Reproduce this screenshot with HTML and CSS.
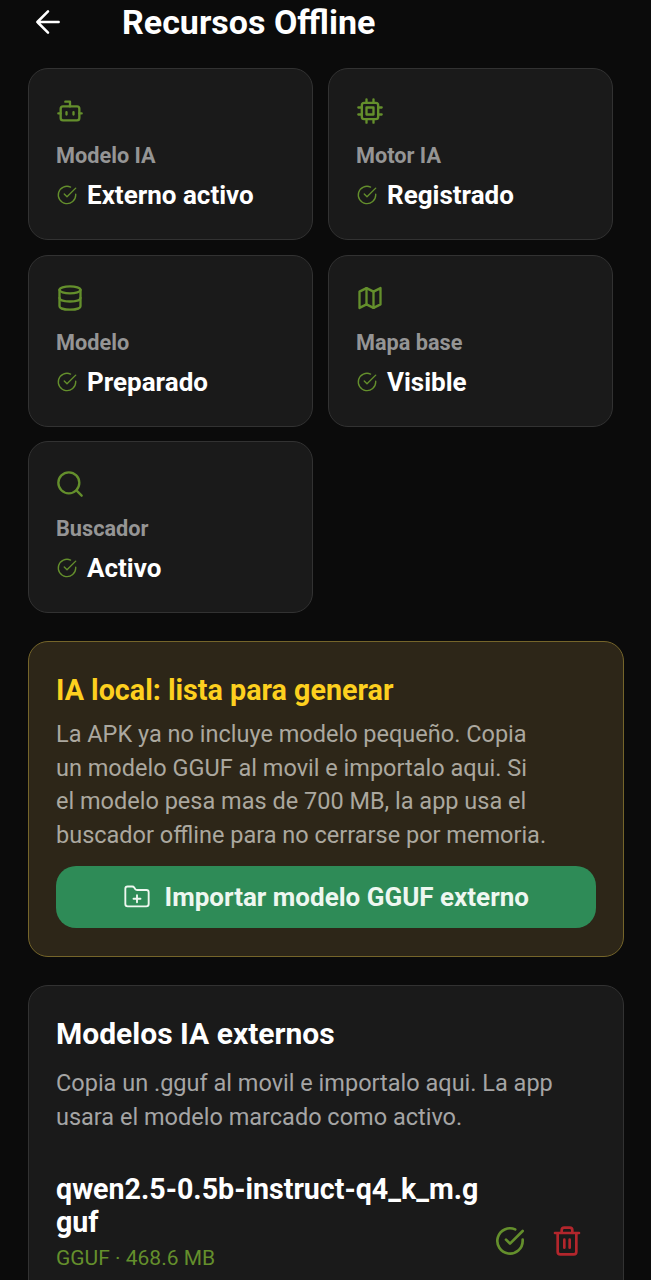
FILE: index.html
```html
<!DOCTYPE html>
<html lang="es">
<head>
  <title>Recursos Offline</title>
  <meta charset="UTF-8">
  <meta name="viewport" content="width=device-width, initial-scale=1.0">
  <link rel="stylesheet" href="styles.css">
</head>
<body>
  <header class="top-bar">
    <svg class="back-icon" viewBox="0 0 24 24"><path d="M19.500 12H4.500M12 4.500 4.500 12l7.500 7.500"/></svg>
    <h1 class="page-title">Recursos Offline</h1>
  </header>

  <main class="content">
    <section class="status-grid">
      <div class="status-card">
        <svg class="card-icon" viewBox="0 0 24 24"><path d="M12 8V4H8"/><rect x="4" y="8" width="16" height="12" rx="2"/><path d="M2 14h2M20 14h2M15 13v2M9 13v2"/></svg>
        <div class="card-label">Modelo IA</div>
        <div class="card-value">
          <svg class="check-icon" viewBox="0 0 24 24"><path d="M21.500 11v1a9.500 9.500 0 1 1-5.600-8.700"/><path d="m21.500 4.500-9.500 9.500-3-3"/></svg>
          <span>Externo activo</span>
        </div>
      </div>
      <div class="status-card">
        <svg class="card-icon" viewBox="0 0 24 24"><rect x="5" y="5" width="14" height="14" rx="2"/><rect x="9" y="9" width="6" height="6"/><path d="M15 2v3M15 19v3M2 15h3M2 9h3M19 15h3M19 9h3M9 2v3M9 19v3"/></svg>
        <div class="card-label">Motor IA</div>
        <div class="card-value">
          <svg class="check-icon" viewBox="0 0 24 24"><path d="M21.500 11v1a9.500 9.500 0 1 1-5.600-8.700"/><path d="m21.500 4.500-9.500 9.500-3-3"/></svg>
          <span>Registrado</span>
        </div>
      </div>
      <div class="status-card">
        <svg class="card-icon" viewBox="0 0 24 24"><ellipse cx="12" cy="5" rx="9" ry="3"/><path d="M3 5v14c0 1.700 4 3 9 3s9-1.300 9-3V5"/><path d="M3 12c0 1.700 4 3 9 3s9-1.300 9-3"/></svg>
        <div class="card-label">Modelo</div>
        <div class="card-value">
          <svg class="check-icon" viewBox="0 0 24 24"><path d="M21.500 11v1a9.500 9.500 0 1 1-5.600-8.700"/><path d="m21.500 4.500-9.500 9.500-3-3"/></svg>
          <span>Preparado</span>
        </div>
      </div>
      <div class="status-card">
        <svg class="card-icon" viewBox="0 0 24 24"><path d="M3 6.500 9 3.500l6 3 6-3v14l-6 3-6-3-6 3z"/><path d="M9 3.500v14M15 6.500v14"/></svg>
        <div class="card-label">Mapa base</div>
        <div class="card-value">
          <svg class="check-icon" viewBox="0 0 24 24"><path d="M21.500 11v1a9.500 9.500 0 1 1-5.600-8.700"/><path d="m21.500 4.500-9.500 9.500-3-3"/></svg>
          <span>Visible</span>
        </div>
      </div>
      <div class="status-card">
        <svg class="card-icon" viewBox="0 0 24 24"><circle cx="11" cy="11" r="9"/><path d="m22 22-4.500-4.500"/></svg>
        <div class="card-label">Buscador</div>
        <div class="card-value">
          <svg class="check-icon" viewBox="0 0 24 24"><path d="M21.500 11v1a9.500 9.500 0 1 1-5.600-8.700"/><path d="m21.500 4.500-9.500 9.500-3-3"/></svg>
          <span>Activo</span>
        </div>
      </div>
    </section>

    <section class="panel panel-warning">
      <h2 class="warning-title">IA local: lista para generar</h2>
      <p class="panel-text warning-text">La APK ya no incluye modelo pequeño. Copia un modelo GGUF al movil e importalo aqui. Si el modelo pesa mas de 700 MB, la app usa el buscador offline para no cerrarse por memoria.</p>
      <button class="import-button">
        <svg class="import-icon" viewBox="0 0 24 24"><path d="M12 10.500v6M9 13.500h6"/><path d="M20 20a2 2 0 0 0 2-2V8a2 2 0 0 0-2-2h-7.900a2 2 0 0 1-1.700-.9l-.8-1.200A2 2 0 0 0 7.900 3H4a2 2 0 0 0-2 2v13a2 2 0 0 0 2 2z"/></svg>
        <span>Importar modelo GGUF externo</span>
      </button>
    </section>

    <section class="panel panel-models">
      <h2 class="models-title">Modelos IA externos</h2>
      <p class="panel-text models-text">Copia un .gguf al movil e importalo aqui. La app usara el modelo marcado como activo.</p>
      <div class="model-row">
        <div class="model-info">
          <div class="model-name">qwen2.5-0.5b-instruct-q4_k_m.gguf</div>
          <div class="model-meta">GGUF · 468.6 MB</div>
        </div>
        <div class="model-actions">
          <svg class="action-icon action-active" viewBox="0 0 24 24"><path d="M21.500 11v1a9.500 9.500 0 1 1-5.600-8.700"/><path d="m21.500 4.500-9.500 9.500-3-3"/></svg>
          <svg class="action-icon action-delete" viewBox="0 0 24 24"><path d="M3 6h18M19 6v14a2 2 0 0 1-2 2H7a2 2 0 0 1-2-2V6M8 6V4a2 2 0 0 1 2-2h4a2 2 0 0 1 2 2v2M10 11v6M14 11v6"/></svg>
        </div>
      </div>
    </section>
  </main>
</body>
</html>
```

FILE: styles.css
```css
html, body {
  height: 1280px;
  overflow: hidden;
}
body {
  margin: 0;
  background-color: #0b0b0b;
  font-family: Roboto, "Noto Sans", Arial, sans-serif;
  color: #fff;
}
svg {
  display: block;
  fill: none;
  stroke: currentColor;
  stroke-width: 2;
  stroke-linecap: round;
  stroke-linejoin: round;
  flex-shrink: 0;
}
.top-bar {
  display: flex;
  align-items: center;
  height: 44px;
  padding-left: 31px;
}
.back-icon {
  width: 34px;
  height: 34px;
  stroke-width: 1.8;
}
.page-title {
  margin: 0 0 0 57px;
  font-size: 34px;
  font-weight: 700;
}
.content {
  padding: 24px 27px 0 28px;
}
.status-grid {
  display: grid;
  grid-template-columns: 285px 285px;
  gap: 14.5px 15px;
}
.status-card {
  height: 172px;
  box-sizing: border-box;
  padding: 28px 27px 0;
  background-color: #1a1a1a;
  border: 1px solid #323232;
  border-radius: 20px;
}
.card-icon {
  width: 28px;
  height: 28px;
  color: #648f2c;
}
.card-label {
  margin-top: 16px;
  font-size: 21.7px;
  font-weight: 700;
  line-height: 30px;
  color: #959595;
}
.card-value {
  display: flex;
  align-items: center;
  gap: 9px;
  margin-top: 7px;
  font-size: 26px;
  font-weight: 700;
  line-height: 34px;
}
.check-icon {
  width: 22px;
  height: 22px;
  stroke-width: 1.5;
  color: #648f2c;
}
.panel {
  box-sizing: border-box;
  width: 595.5px;
  border-radius: 20px;
}
.panel-warning {
  height: 316px;
  margin-top: 28px;
  padding: 30px 27px 0;
  background-color: #2d2618;
  border: 1px solid #75652a;
}
.warning-title {
  margin: 0;
  font-size: 28.7px;
  font-weight: 700;
  line-height: 36px;
  color: #fdd01f;
}
.panel-text {
  margin: 10px 0 0;
  font-size: 23.5px;
  line-height: 33.7px;
  color: #a5a5a5;
}
.warning-text {
  max-width: 492px;
  color: #aba89f;
}
.import-button {
  display: flex;
  align-items: center;
  justify-content: center;
  gap: 14px;
  width: 100%;
  height: 62px;
  margin-top: 13px;
  border: 0;
  border-radius: 20px;
  background-color: #2e8b57;
  font-family: inherit;
  font-size: 26px;
  font-weight: 700;
  color: #eef7f0;
}
.import-icon {
  width: 28px;
  height: 28px;
  stroke-width: 1.6;
}
.panel-models {
  height: 400px;
  margin-top: 28px;
  padding: 30px 27px 0;
  background-color: #1a1a1a;
  border: 1px solid #323232;
}
.models-title {
  margin: 0;
  font-size: 30px;
  font-weight: 700;
  line-height: 36px;
}
.models-text {
  margin-top: 15px;
}
.model-row {
  display: flex;
  align-items: flex-end;
  margin-top: 39px;
}
.model-info {
  width: 430px;
}
.model-name {
  font-size: 28.6px;
  font-weight: 700;
  line-height: 33px;
  word-break: break-all;
}
.model-meta {
  margin-top: 5px;
  font-size: 21px;
  line-height: 28px;
  color: #648f2c;
}
.model-actions {
  display: flex;
  align-items: center;
  gap: 25px;
  margin: 0 0 15px 8px;
}
.action-icon {
  width: 32px;
  height: 32px;
}
.action-active {
  color: #648f2c;
}
.action-delete {
  color: #b3262c;
}
```
